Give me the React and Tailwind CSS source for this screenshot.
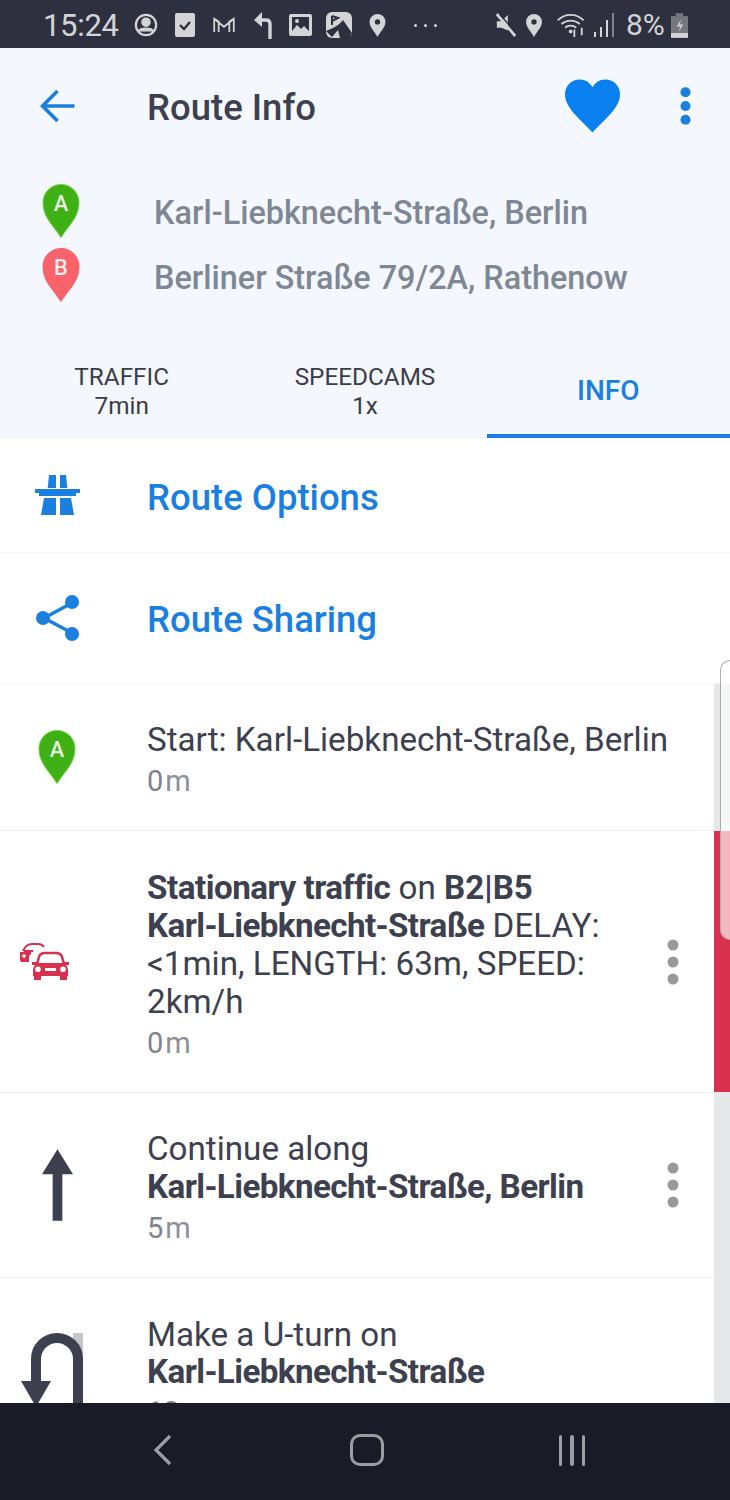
import React from "react";

const Pin = ({ color, edge, letter, className }) => (
  <svg viewBox="0 0 40 58" className={className}>
    <path d="M20 57C12 44 1 36 1 20a19 19 0 0 1 38 0C39 36 28 44 20 57z" fill={color} stroke={edge} strokeWidth="1" />
    <text x="20" y="29" textAnchor="middle" fontSize="23" fontWeight="500" fontFamily="Roboto, sans-serif" fill="#fff" fillOpacity="0.88">
      {letter}
    </text>
  </svg>
);

const Dots = ({ className, fill, gap = 17 }) => (
  <svg viewBox="0 0 12 46" className={className} fill={fill}>
    <circle cx="6" cy={23 - gap} r="5.500" />
    <circle cx="6" cy="23" r="5.500" />
    <circle cx="6" cy={23 + gap} r="5.500" />
  </svg>
);

const StatusBar = () => (
  <div className="h-12 shrink-0 bg-[#2f303f] flex items-center pl-[43px] pr-[42px] pt-[2px] text-[#d4d4d6]">
    <span className="text-[31px] leading-none w-[91px] tracking-[-0.3px]">15:24</span>
    <div className="flex items-center">
      <svg viewBox="0 0 26 26" className="w-6 h-6" fill="none" stroke="currentColor" strokeWidth="2.4">
        <circle cx="13" cy="13" r="11" />
        <circle cx="13" cy="10" r="4" fill="currentColor" />
        <path d="M5 20c2-4 14-4 16 0" fill="currentColor" />
      </svg>
      <svg viewBox="0 0 20 24" className="w-5 h-6 ml-[17px]">
        <rect width="20" height="24" rx="2" fill="currentColor" />
        <path d="M5 12l4 4 6-7" fill="none" stroke="#2f303f" strokeWidth="2.4" />
      </svg>
      <svg viewBox="0 0 26 18" className="w-6 h-4 ml-[17px]" fill="none" stroke="currentColor" strokeWidth="2">
        <path d="M2 17V2l11 9 11-9v15M2 2l5 3v12M24 2l-5 3v12" />
      </svg>
      <svg viewBox="0 0 18 27" className="w-[18px] h-[27px] ml-[18px]" fill="none" stroke="currentColor" strokeWidth="3.4">
        <path d="M16 27V12q0-4-4-4H6" />
        <path d="M8 0v15L0 8z" fill="currentColor" stroke="none" />
      </svg>
      <svg viewBox="0 0 23 22" className="w-[23px] h-[22px] ml-[17px]">
        <rect width="23" height="22" rx="2" fill="currentColor" />
        <rect x="3" y="3" width="17" height="16" fill="#2f303f" />
        <path d="M3 17l5-6 4 4 3-3 5 5v2H3z" fill="currentColor" />
        <circle cx="8" cy="7" r="2" fill="currentColor" />
      </svg>
      <svg viewBox="0 0 26 26" className="w-[26px] h-[26px] ml-[14px]">
        <rect width="26" height="26" rx="6" fill="currentColor" />
        <path d="M0 19C8 16 13 13 17 8l9 13-3 5H14L12 18 6 25z" fill="#2f303f" />
        <path d="M6 4v9M6 4l6 2-6 3" fill="none" stroke="#2f303f" strokeWidth="2" />
      </svg>
      <svg viewBox="0 0 18 26" className="w-[17px] h-[23px] ml-[17px]" fill="currentColor">
        <path fillRule="evenodd" d="M9 26C6 20 0 15 0 9a9 9 0 0 1 18 0c0 6-6 11-9 17zM9 6a3 3 0 1 0 0 6 3 3 0 0 0 0-6z" />
      </svg>
      <div className="flex gap-[7px] ml-[28px]">
        <span className="w-[3px] h-[3px] rounded-full bg-[#d4d4d6]" />
        <span className="w-[3px] h-[3px] rounded-full bg-[#d4d4d6]" />
        <span className="w-[3px] h-[3px] rounded-full bg-[#d4d4d6]" />
      </div>
    </div>
    <div className="flex items-center ml-auto">
      <svg viewBox="0 0 24 26" className="w-[22px] h-6" fill="currentColor">
        <path d="M2 9h5l7-7v17l-7-3H2z" />
        <path d="M2 1l20 24" stroke="currentColor" strokeWidth="3" />
        <path d="M5 1l19 22" stroke="#2f303f" strokeWidth="1.5" />
      </svg>
      <svg viewBox="0 0 18 26" className="w-[18px] h-[23px] ml-2" fill="currentColor">
        <path fillRule="evenodd" d="M9 26C6 20 0 15 0 9a9 9 0 0 1 18 0c0 6-6 11-9 17zM9 6a3 3 0 1 0 0 6 3 3 0 0 0 0-6z" />
      </svg>
      <svg viewBox="0 0 34 26" className="w-[33px] h-6 ml-[13px]" fill="none" stroke="currentColor" strokeWidth="2">
        <path d="M1 8c8-8 20-8 28 0M5 12c6-5 14-5 20 0M9 16c3-3 9-3 12 0" />
        <circle cx="15" cy="20" r="2" fill="currentColor" stroke="none" />
        <path d="M19 18v8M27 16v8" />
      </svg>
      <svg viewBox="0 0 20 24" className="w-5 h-6 ml-[5px]" fill="currentColor">
        <rect x="0" y="19" width="2" height="5" />
        <rect x="6" y="14" width="2" height="10" />
        <rect x="12" y="7" width="2" height="17" />
        <rect x="18" y="0" width="2" height="24" opacity="0.5" />
      </svg>
      <span className="text-[30px] leading-none ml-3 w-[37px]">8%</span>
      <svg viewBox="0 0 18 26" className="w-[17px] h-[25px] ml-2">
        <rect x="5" width="8" height="3" fill="#77777f" />
        <rect y="3" width="18" height="23" fill="#77777f" />
        <rect y="21" width="18" height="5" fill="#d4d4d6" />
        <path d="M11 6l-5 8h4l-2 6 5-8H9z" fill="#d4d4d6" />
      </svg>
    </div>
  </div>
);

const NavRow = ({ icon, label, className, labelClass }) => (
  <div className={`flex items-center border-b border-[#f4f5f8] ${className}`}>
    <div className="w-[147px] flex justify-center pr-[33px]">{icon}</div>
    <span className={`text-[36.500px] leading-none font-medium text-[#1a7fdf] ${labelClass}`}>{label}</span>
  </div>
);

const Step = ({ icon, children, meta, dots, className }) => (
  <div className={`flex items-center border-b border-[#f1f2f4] overflow-hidden ${className}`}>
    <div className="w-[147px] shrink-0 flex justify-center pr-[33px]">{icon}</div>
    <div className="flex-1 text-[33.200px] leading-[38px] text-[#3d404f] pt-2">
      {children}
      <div className="text-[#7f828c] text-[29px] leading-[40px] mt-[2px]">
        {meta}
        <span className="ml-[2px] text-[#8e9099]">m</span>
      </div>
    </div>
    {dots && <Dots fill="#98999d" className="w-[12px] h-[46px] mr-[35px] shrink-0" />}
  </div>
);

export default function App() {
  return (
    <div className="w-[730px] h-[1500px] flex flex-col overflow-hidden bg-white font-['Roboto',sans-serif]">
      <StatusBar />

      <div className="h-[390px] shrink-0 bg-[#f4f7fd] flex flex-col">
        <div className="h-[116px] flex items-center shrink-0">
          <div className="w-[147px] pl-10">
            <svg viewBox="0 0 34 34" className="w-[35px] h-[34px]" fill="none" stroke="#1a7fdf" strokeWidth="3.600">
              <path d="M34 17H3M17 2L2 17l15 15" />
            </svg>
          </div>
          <span className="text-[36.500px] leading-none font-medium text-[#3d404f] flex-1 mt-[5px]">Route Info</span>
          <svg viewBox="0 0 56 54" className="w-[55px] h-[54px] mr-[60px]" fill="#0a7ff0">
            <path d="M28 54C18 42 0 30 0 15 0 6 7 0 15 0c6 0 10 3 13 8 3-5 7-8 13-8 8 0 15 6 15 15 0 15-18 27-28 39z" />
          </svg>
          <Dots fill="#1a7fdf" gap={15} className="w-[11px] h-[42px] mr-[39px]" />
        </div>

        <div className="flex items-center h-[65px] mt-4">
          <div className="w-[154px] pl-[42px]">
            <Pin color="#3fb015" edge="#6fd83f" letter="A" className="w-[38px] h-14 -mt-1" />
          </div>
          <span className="text-[32.400px] leading-none text-[#7e8794] font-medium mt-[2px]">Karl-Liebknecht-Straße, Berlin</span>
        </div>
        <div className="flex items-center h-[65px]">
          <div className="w-[154px] pl-[42px]">
            <Pin color="#f8636b" edge="#f8636b" letter="B" className="w-[38px] h-14 -mt-[5px]" />
          </div>
          <span className="text-[32.400px] leading-none text-[#7e8794] font-medium mt-[2px]">Berliner Straße 79/2A, Rathenow</span>
        </div>

        <div className="mt-auto h-[92px] grid grid-cols-3 border-b border-[#eceef2] text-center">
          <div className="flex flex-col justify-center pb-[2px] text-[24.300px] leading-[29px] text-[#3a3c48]">
            <span>TRAFFIC</span>
            <span>7min</span>
          </div>
          <div className="flex flex-col justify-center pb-[2px] text-[24.300px] leading-[29px] text-[#3a3c48]">
            <span>SPEEDCAMS</span>
            <span>1x</span>
          </div>
          <div className="flex items-center justify-center border-b-[4px] -mb-px pt-[2px] border-[#1a7fdf] text-[28px] font-medium text-[#1a7fdf]">
            INFO
          </div>
        </div>
      </div>

      <NavRow
        className="h-[115px] shrink-0"
        label="Route Options"
        labelClass="mt-[6px]"
        icon={
          <svg viewBox="0 0 45 40" className="w-[45px] h-10" fill="#1a7fdf">
            <path d="M14 0h7v13H12.700zM25 0h6l1.300 13H25zM0 14h45v4H0zM4 18h37v3H4zM9 23h12v17H6zM25 23h11l3 17H25z" />
          </svg>
        }
      />
      <NavRow
        className="h-[131px] shrink-0"
        label="Route Sharing"
        labelClass="mt-[4px]"
        icon={
          <svg viewBox="0 0 44 46" className="w-[44px] h-[46px] translate-x-px" fill="#1a7fdf" stroke="#1a7fdf">
            <path d="M36 8L8 23l28 15" fill="none" strokeWidth="3.500" />
            <circle cx="36" cy="7" r="7" stroke="none" />
            <circle cx="7" cy="23" r="7" stroke="none" />
            <circle cx="36" cy="39" r="7" stroke="none" />
          </svg>
        }
      />

      <div className="relative flex flex-1 min-h-0">
        <div className="flex-1 min-w-0">
          <Step
            className="h-[147px]"
            meta="0"
            icon={<Pin color="#3fb015" edge="#6fd83f" letter="A" className="w-[38px] h-14" />}
          >
            <div>Start: Karl-Liebknecht-Straße, Berlin</div>
          </Step>
          <Step
            className="h-[262px]"
            meta="0"
            dots
            icon={
              <svg viewBox="0 0 50 38" className="w-[50px] h-[38px] -translate-x-3" fill="#d9304f">
                <path d="M3 8Q6 1 12 1h6q4 0 6 3" fill="none" stroke="#d9304f" strokeWidth="2" />
                <path d="M0 9h11v2l-2 2v6H1q-1-1-1-3zM4 7h9v2H4z" />
                <circle cx="4" cy="13" r="1.800" fill="#fff" />
                <path d="M17 21l2-7q1-4 6-4h11q5 0 6 4l2 7" fill="none" stroke="#d9304f" strokeWidth="2.500" />
                <path fillRule="evenodd" d="M12 19h5v1h27v-1h5v3h-3q2 2 2 5v6h-1v4h-7v-4H21v4h-7v-4h-1v-6q0-3 2-5h-3zM18 23.500a2.800 2.800 0 1 0 0 5.600 2.800 2.800 0 0 0 0-5.600zM43 23.500a2.800 2.800 0 1 0 0 5.600 2.800 2.800 0 0 0 0-5.600zM25 25v3h11v-3z" />
              </svg>
            }
          >
            <div>
              <b className="font-bold tracking-[-0.5px]">Stationary traffic</b> on <b className="font-bold">B2|B5</b>
            </div>
            <div>
              <b className="font-bold tracking-[-0.6px]">Karl-Liebknecht-Straße</b> DELAY:
            </div>
            <div>&lt;1min, LENGTH: 63m, SPEED:</div>
            <div>2km/h</div>
          </Step>
          <Step
            className="h-[185px]"
            meta="5"
            dots
            icon={
              <svg viewBox="0 0 32 74" className="w-[31px] h-[74px]" fill="#3d404f">
                <path d="M16 0l16 26H21v48h-10V26H0z" />
              </svg>
            }
          >
            <div>Continue along</div>
            <b className="font-bold tracking-[-0.6px] block">Karl-Liebknecht-Straße, Berlin</b>
          </Step>
          <div className="flex items-start">
            <div className="w-[147px] shrink-0 pl-[21px] pt-[55px]">
              <svg viewBox="0 0 62 72" className="w-[62px] h-[72px]">
                <path d="M52 0h10v72H52z" fill="#c3c6cb" />
                <path d="M57 72V26A21 21 0 0 0 15 26V52" fill="none" stroke="#3d404f" strokeWidth="10" />
                <path d="M0 48h30L15 74z" fill="#3d404f" />
              </svg>
            </div>
            <div className="text-[33.200px] leading-[37px] text-[#3d404f] pt-[38px]">
              <div>Make a U-turn on</div>
              <b className="font-bold tracking-[-0.6px] block">Karl-Liebknecht-Straße</b>
              <div className="text-[#7f828c] text-[29px] leading-[40px] mt-[2px]">12m</div>
            </div>
          </div>
        </div>

        <div className="w-4 shrink-0 bg-[#e6e8e9] flex flex-col">
          <div className="h-[147px]" />
          <div className="h-[261px] bg-[#d9304f]" />
        </div>

        <div className="absolute right-0 top-[-24px] w-[10px] h-[280px] rounded-l-[10px] border-l border-t border-b border-[#a9acb0] bg-white/65" />
      </div>

      <div className="h-[97px] shrink-0 bg-[#1a1b27] grid grid-cols-[1fr_auto_1fr] items-center z-10 relative">
        <div className="flex justify-start pl-[152px] pb-[3px]">
          <svg viewBox="0 0 20 32" className="w-5 h-8" fill="none" stroke="#9d9ea4" strokeWidth="3.200">
            <path d="M18 2L4 16l14 14" />
          </svg>
        </div>
        <div className="w-[34px] h-[32px] rounded-[10px] border-[3.5px] border-[#9d9ea4] mb-[3px] translate-x-[2px]" />
        <div className="flex justify-end gap-[8px] pr-[145px] pb-[3px]">
          <span className="w-[3.5px] h-[31px] bg-[#9d9ea4] rounded-sm" />
          <span className="w-[3.5px] h-[31px] bg-[#9d9ea4] rounded-sm" />
          <span className="w-[3.5px] h-[31px] bg-[#9d9ea4] rounded-sm" />
        </div>
      </div>
    </div>
  );
}
